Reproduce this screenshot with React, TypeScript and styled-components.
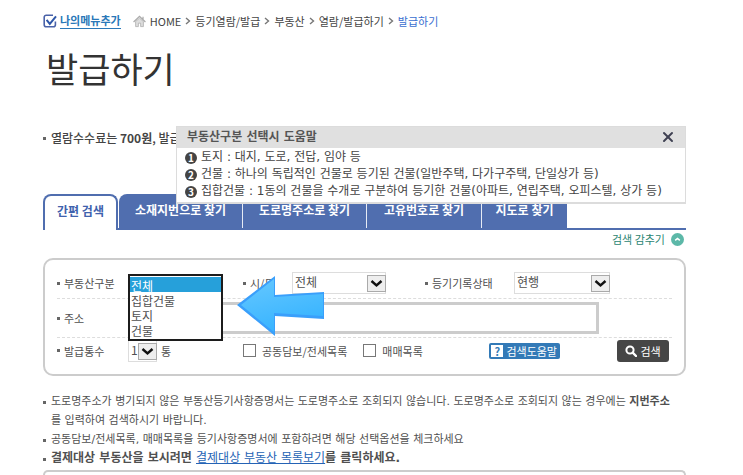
import React from "react";
import styled, { createGlobalStyle, css } from "styled-components";
import { X } from "lucide-react";

const GlobalStyle = createGlobalStyle`
  * { box-sizing: border-box; }
  body {
    margin: 0;
    background: #fff;
    color: #505050;
    font-family: "Noto Sans CJK KR", "Liberation Sans", sans-serif;
    font-size: 11px;
    line-height: 18px;
  }
  button, input, select, option { font: inherit; color: inherit; }
  h1, p, ul, ol { margin: 0; padding: 0; }
  ul, ol { list-style: none; }
`;

const Page = styled.main`
  display: flex;
  flex-direction: column;
  min-height: 100vh;
  padding: 12px 57px 0 43px;
`;

const TopBar = styled.div`
  display: flex;
  align-items: center;
  gap: 12px;
  height: 18px;
`;

const MyMenu = styled.div`
  display: flex;
  align-items: center;
  gap: 3px;
`;

const MyMenuLink = styled.a`
  color: #2a78b8;
  font-weight: 700;
  line-height: 15px;
  text-decoration: none;
  border-bottom: 1px solid #2a78b8;
`;

const Crumbs = styled.nav`
  display: flex;
  align-items: center;
  gap: 4px;
`;

const Crumb = styled.a<{ $current?: boolean }>`
  color: ${(p) => (p.$current ? "#3a6fd0" : "#444")};
  text-decoration: none;
  white-space: nowrap;
`;

const Title = styled.h1`
  margin-top: 14px;
  padding-left: 3px;
  color: #333;
  font-size: 35px;
  font-weight: 400;
  line-height: 48px;
`;

const NoticeArea = styled.div`
  position: relative;
  margin-top: 34px;
`;

const bullet = css`
  &::before {
    content: "";
    flex: none;
    width: 3px;
    height: 3px;
    background: #666;
  }
`;

const Notice = styled.p`
  ${bullet}
  display: flex;
  align-items: center;
  gap: 5px;
  height: 24px;
  font-size: 12px;
  font-weight: 500;
  color: #444;
  white-space: nowrap;
  overflow: hidden;
`;

const HelpBox = styled.section`
  position: absolute;
  z-index: 2;
  top: 0;
  left: 133px;
  right: 0;
  border: 1px solid #dcdcdc;
  border-bottom-width: 2px;
  background: #fff;
`;

const HelpHead = styled.header`
  display: flex;
  align-items: center;
  justify-content: space-between;
  height: 21px;
  padding: 0 9px 2px 10px;
  background: #e0e0e0;
  font-family: "DejaVu Sans", "Noto Sans CJK KR", sans-serif;
  font-size: 12px;
  font-weight: 700;
  color: #555;
`;

const CloseButton = styled.button`
  display: flex;
  padding: 0;
  border: 0;
  background: none;
  color: #3f4152;
`;

const HelpList = styled.ol`
  padding: 1px 8px 2px;
`;

const HelpItem = styled.li`
  display: flex;
  align-items: center;
  gap: 4px;
  height: 17px;
  font-family: "DejaVu Sans", "Noto Sans CJK KR", sans-serif;
  font-size: 12px;
  line-height: 17px;
  color: #444;
  white-space: nowrap;
`;

const Num = styled.span`
  flex: none;
  width: 12px;
  height: 12px;
  border-radius: 50%;
  background: #444;
  color: #fff;
  font-family: "Noto Sans CJK KR", sans-serif;
  font-size: 10px;
  font-weight: 700;
  line-height: 12px;
  text-align: center;
`;

const Tabs = styled.div`
  display: flex;
  margin-top: 44px;
  border-bottom: 2px solid #506eaf;
`;

const Tab = styled.button<{ $width: number; $active?: boolean }>`
  width: ${(p) => p.$width}px;
  height: 34px;
  padding: 0 0 3px;
  border: 0;
  border-right: 1px solid #e6ebf5;
  background: #506eaf;
  color: #fff;
  font-size: 12px;
  font-weight: 700;
  white-space: nowrap;
  &:nth-child(2) { border-top-left-radius: 8px; }
  &:last-child { border-right: 0; }
  ${(p) =>
    p.$active &&
    css`
      height: 36px;
      margin-bottom: -2px;
      margin-right: 1px;
      padding-bottom: 5px;
      border: 2px solid #506eaf;
      border-bottom: 0;
      border-radius: 8px 8px 0 0;
      background: #fff;
      color: #3f62ad;
    `}
`;

const ToggleRow = styled.div`
  display: flex;
  justify-content: flex-end;
  height: 18px;
  padding-right: 2px;
`;

const ToggleButton = styled.button`
  display: flex;
  align-items: center;
  gap: 6px;
  padding: 0;
  border: 0;
  background: none;
  color: #2c8573;
`;

const Panel = styled.form`
  position: relative;
  margin-top: 10px;
  padding: 8px 12px 11px;
  border: 2px solid #ccc;
  border-radius: 10px;
`;

const Row = styled.div<{ $height: number; $last?: boolean }>`
  display: grid;
  grid-template-columns: 71px 115px 49px 133px 89px 1fr;
  align-items: center;
  height: ${(p) => p.$height}px;
  border-bottom: ${(p) => (p.$last ? "0" : "1px dashed #ddd")};
`;

const Label = styled.label`
  ${bullet}
  display: flex;
  align-items: center;
  gap: 4px;
  white-space: nowrap;
`;

const Field = styled.div`
  display: flex;
  align-items: center;
  gap: 4px;
  position: relative;
`;

const SelectWrap = styled.span<{ $width: number }>`
  display: flex;
  position: relative;
  width: ${(p) => p.$width}px;
  svg { position: absolute; right: 0; top: 3px; pointer-events: none; }
`;

const Select = styled.select`
  appearance: none;
  width: 100%;
  height: 22px;
  padding: 0 0 4px 2px;
  border: 1px solid #ddd;
  border-radius: 0;
  background: #fff;
  font-size: 12px;
  line-height: 17px;
`;

const OpenList = styled.select`
  position: absolute;
  z-index: 1;
  top: -9px;
  left: 0;
  width: 95px;
  height: 67px;
  padding: 1px 0 2px;
  border: 2px solid #1c1c1c;
  border-radius: 0;
  background: #fff;
  font-size: 12px;
  overflow: hidden;
  outline: 0;
  option {
    height: 15px;
    min-height: 15px;
    padding: 0 1px;
    line-height: 11px;
  }
  option:checked {
    background: #26a0da linear-gradient(#26a0da, #26a0da);
    color: #fff;
  }
`;

const AddressInput = styled.input`
  width: 471px;
  max-width: 100%;
  height: 32px;
  padding: 0 6px;
  border: 3px solid #ccc;
  border-radius: 0;
  background: #fff;
`;

const AddressField = styled.div`
  grid-column: 2 / -1;
  display: flex;
`;

const Actions = styled.div`
  grid-column: 3 / -1;
  display: flex;
  align-items: center;
  padding-right: 3px;
`;

const Check = styled.label`
  display: flex;
  align-items: center;
  gap: 6px;
  margin-right: 16px;
  white-space: nowrap;
`;

const CheckInput = styled.input`
  appearance: none;
  width: 13px;
  height: 13px;
  margin: 0;
  border: 1px solid #777;
  background: #fff;
  &:checked { background: #777; }
`;

const HelpButton = styled.button`
  display: flex;
  align-items: center;
  gap: 3px;
  height: 16px;
  margin-left: auto;
  padding: 0 3px 0 2px;
  border: 0;
  border-radius: 2px;
  background: #337ab7;
  color: #fff;
  white-space: nowrap;
`;

const QMark = styled.span`
  width: 12px;
  height: 12px;
  background: #fff;
  color: #337ab7;
  font-weight: 700;
  line-height: 12px;
  text-align: center;
`;

const SearchButton = styled.button`
  display: flex;
  align-items: center;
  justify-content: center;
  gap: 3px;
  width: 52px;
  height: 22px;
  margin-left: 57px;
  padding: 0;
  border: 0;
  border-radius: 3px;
  background: #464646;
  color: #fff;
  white-space: nowrap;
`;

const ArrowSvg = styled.svg`
  position: absolute;
  z-index: 2;
  top: 15px;
  left: 192px;
  pointer-events: none;
`;

const Notes = styled.ul`
  margin-top: 16px;
  font-family: "DejaVu Sans", "Noto Sans CJK KR", sans-serif;
  line-height: 19px;
`;

const Note = styled.li<{ $strong?: boolean }>`
  ${bullet}
  display: flex;
  gap: 5px;
  height: ${(p) => (p.$strong ? "19px" : "auto")};
  font-size: ${(p) => (p.$strong ? 12 : 11)}px;
  font-weight: ${(p) => (p.$strong ? 700 : 400)};
  white-space: nowrap;
  &::before { margin-top: 9px; }
  a { color: #2563b5; font-weight: 400; }
`;

const NextPanel = styled.section`
  flex: 1;
  margin-top: 2px;
  border: 2px solid #ccc;
  border-bottom: 0;
  border-radius: 10px 10px 0 0;
`;

const Sep = () => (
  <svg width="6" height="8" viewBox="0 0 6 8" aria-hidden="true">
    <path d="M1 1l3.5 3L1 7" fill="none" stroke="#777" strokeWidth="1.4" />
  </svg>
);

const CheckIcon = () => (
  <svg width="14" height="14" viewBox="0 0 14 14" aria-hidden="true">
    <path d="M10 1.2H3.2a2 2 0 0 0-2 2v7.6a2 2 0 0 0 2 2h7.2a2 2 0 0 0 2-2V7.5" fill="none" stroke="#4a62a8" strokeWidth="1.6" />
    <path d="M3.6 5.8l3.2 4L13 2.4" fill="none" stroke="#2e56a8" strokeWidth="2" />
  </svg>
);

const HomeIcon = () => (
  <svg width="13" height="13" viewBox="0 0 14 13" aria-hidden="true">
    <path d="M2.8 6.5V12h3V8.3h2.4V12h3V6.5L7 2.8z" fill="#ddd" stroke="#aaa" strokeWidth=".8" />
    <path d="M.6 7L7 1l6.4 6M10.8 1.4v3" fill="none" stroke="#aaa" strokeWidth="1.3" />
  </svg>
);

const DropIcon = () => (
  <svg width="19" height="17" viewBox="0 0 19 17" aria-hidden="true">
    <rect x=".5" y=".5" width="18" height="16" fill="#eee" stroke="#aaa" />
    <path d="M4.5 6l5 4.5 5-4.5" fill="none" stroke="#111" strokeWidth="2.4" />
  </svg>
);

const UpIcon = () => (
  <svg width="13" height="13" viewBox="0 0 13 13" aria-hidden="true">
    <circle cx="6.5" cy="6.5" r="6.5" fill="#5cb8a8" />
    <path d="M4.2 7.4l2.3-2 2.3 2" fill="none" stroke="#fff" strokeWidth="1.5" />
  </svg>
);

const SearchIcon = () => (
  <svg width="12" height="12" viewBox="0 0 12 12" aria-hidden="true">
    <circle cx="5" cy="5" r="3.6" fill="none" stroke="#fff" strokeWidth="2" />
    <path d="M7.7 7.7L11 11" stroke="#fff" strokeWidth="2.4" strokeLinecap="round" />
  </svg>
);

const BlueArrow = () => (
  <ArrowSvg width="88" height="62" viewBox="0 0 88 62" aria-hidden="true">
    <defs>
      <linearGradient id="arrowFill" x1="0" y1="0" x2="0.4" y2="1">
        <stop offset="0" stopColor="#66c8ff" />
        <stop offset="1" stopColor="#38b4ff" />
      </linearGradient>
    </defs>
    <path d="M38 1v19L87 17v27L38 41v20L0 30z" fill="#3a9ffb" />
    <path d="M37 4v18L86 19v22L37 38v19L4 30z" fill="url(#arrowFill)" />
  </ArrowSvg>
);

const helpItems = [
  "토지 : 대지, 도로, 전답, 임야 등",
  "건물 : 하나의 독립적인 건물로 등기된 건물(일반주택, 다가구주택, 단일상가 등)",
  "집합건물 : 1동의 건물을 수개로 구분하여 등기한 건물(아파트, 연립주택, 오피스텔, 상가 등)",
];

const tabs = [
  { label: "간편 검색", width: 75 },
  { label: "소재지번으로 찾기", width: 124 },
  { label: "도로명주소로 찾기", width: 124 },
  { label: "고유번호로 찾기", width: 115 },
  { label: "지도로 찾기", width: 85 },
];

export default function App() {
  return (
    <>
      <GlobalStyle />
      <Page>
        <TopBar>
          <MyMenu>
            <CheckIcon />
            <MyMenuLink href="#mymenu">나의메뉴추가</MyMenuLink>
          </MyMenu>
          <Crumbs>
            <HomeIcon />
            <Crumb href="#home">HOME</Crumb>
            <Sep />
            <Crumb href="#registry">등기열람/발급</Crumb>
            <Sep />
            <Crumb href="#realty">부동산</Crumb>
            <Sep />
            <Crumb href="#view">열람/발급하기</Crumb>
            <Sep />
            <Crumb href="#issue" $current>발급하기</Crumb>
          </Crumbs>
        </TopBar>
        <Title>발급하기</Title>

        <NoticeArea>
          <Notice>
            <span>열람수수료는 <b>700원</b>, 발급</span>
          </Notice>
          <HelpBox>
            <HelpHead>
              부동산구분 선택시 도움말
              <CloseButton type="button" aria-label="닫기">
                <X size={16} strokeWidth={3} />
              </CloseButton>
            </HelpHead>
            <HelpList>
              {helpItems.map((text, i) => (
                <HelpItem key={text}>
                  <Num>{i + 1}</Num>
                  {text}
                </HelpItem>
              ))}
            </HelpList>
          </HelpBox>
        </NoticeArea>

        <Tabs role="tablist">
          {tabs.map((t, i) => (
            <Tab key={t.label} type="button" role="tab" aria-selected={i === 0} $width={t.width} $active={i === 0}>
              {t.label}
            </Tab>
          ))}
        </Tabs>
        <ToggleRow>
          <ToggleButton type="button">
            검색 감추기
            <UpIcon />
          </ToggleButton>
        </ToggleRow>

        <Panel>
          <Row $height={31}>
            <Label htmlFor="kind">부동산구분</Label>
            <Field>
              <OpenList id="kind" size={4} defaultValue="전체">
                <option>전체</option>
                <option>집합건물</option>
                <option>토지</option>
                <option>건물</option>
              </OpenList>
            </Field>
            <Label htmlFor="region">시/도</Label>
            <Field>
              <SelectWrap $width={94}>
                <Select id="region"><option>전체</option></Select>
                <DropIcon />
              </SelectWrap>
            </Field>
            <Label htmlFor="state">등기기록상태</Label>
            <Field>
              <SelectWrap $width={96}>
                <Select id="state"><option>현행</option></Select>
                <DropIcon />
              </SelectWrap>
            </Field>
          </Row>
          <Row $height={39}>
            <Label htmlFor="address">주소</Label>
            <AddressField>
              <AddressInput id="address" type="text" />
            </AddressField>
          </Row>
          <Row $height={25} $last>
            <Label htmlFor="copies">발급통수</Label>
            <Field>
              <SelectWrap $width={29}>
                <Select id="copies"><option>1</option></Select>
                <DropIcon />
              </SelectWrap>
              통
            </Field>
            <Actions>
              <Check>
                <CheckInput type="checkbox" />
                공동담보/전세목록
              </Check>
              <Check>
                <CheckInput type="checkbox" />
                매매목록
              </Check>
              <HelpButton type="button">
                <QMark>?</QMark>
                검색도움말
              </HelpButton>
              <SearchButton type="submit">
                <SearchIcon />
                검색
              </SearchButton>
            </Actions>
          </Row>
          <BlueArrow />
        </Panel>

        <Notes>
          <Note>
            <span>
              도로명주소가 병기되지 않은 부동산등기사항증명서는 도로명주소로 조회되지 않습니다. 도로명주소로 조회되지 않는 경우에는 <b>지번주소</b>
              <br />
              를 입력하여 검색하시기 바랍니다.
            </span>
          </Note>
          <Note>공동담보/전세목록, 매매목록을 등기사항증명서에 포함하려면 해당 선택옵션을 체크하세요</Note>
          <Note $strong>
            <span>
              결제대상 부동산을 보시려면 <a href="#pending">결제대상 부동산 목록보기</a>를 클릭하세요.
            </span>
          </Note>
        </Notes>
        <NextPanel />
      </Page>
    </>
  );
}
